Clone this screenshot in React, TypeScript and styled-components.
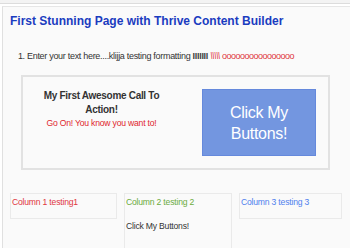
import React from "react";
import styled, { createGlobalStyle } from "styled-components";

const GlobalStyle = createGlobalStyle`
  html, body {
    margin: 0;
    padding: 0;
    background: #ffffff;
  }
  body {
    font-family: "Liberation Sans", Arial, sans-serif;
    overflow: hidden;
  }
`;

const TopStrip = styled.div`
  height: 3px;
  background: #f3f3f3;
  border-bottom: 1px solid #dcdcdc;
`;

const Panel = styled.div`
  box-sizing: border-box;
  margin: 2px 0 0 2px;
  height: calc(100vh - 6px);
  overflow: hidden;
  background: #fafafa;
  border-top: 1px solid #e6e6e6;
  border-left: 1px solid #e0e0e0;
  padding: 0 0 0 7px;
`;

const Title = styled.h1`
  margin: 0;
  padding-top: 5px;
  font-family: "Liberation Sans", Arial, sans-serif;
  font-weight: bold;
  font-size: 12px;
  line-height: 18px;
  color: #1b3cc0;
  white-space: nowrap;
`;

const List = styled.ol`
  margin: 19px 0 0 0;
  padding-left: 17px;
  font-size: 9px;
  line-height: 14px;
  letter-spacing: -0.3px;
  color: #333;
  white-space: nowrap;
`;

const Strong = styled.b`
  color: #444;
`;

const Red = styled.span<{ $italic?: boolean }>`
  color: #e0363e;
  font-style: ${(p) => (p.$italic ? "italic" : "normal")};
  letter-spacing: ${(p) => (p.$italic ? "-0.6px" : "-0.5px")};
`;

const CtaBox = styled.div`
  margin: 12px 20px 0 11px;
  height: 91px;
  border: 2px solid #e2e2e2;
  display: grid;
  grid-template-columns: 1fr 114px;
  align-items: center;
  padding: 0 12px 0 8px;
`;

const CtaText = styled.div`
  align-self: start;
  padding: 12px 30px 0 0;
  text-align: center;
`;

const CtaHeading = styled.div`
  font-weight: bold;
  font-size: 10px;
  line-height: 14px;
  letter-spacing: -0.3px;
  color: #333;
`;

const CtaSub = styled.div`
  font-size: 8.6px;
  line-height: 13px;
  letter-spacing: -0.2px;
  color: #e0262e;
`;

const CtaButton = styled.button`
  height: 67px;
  width: 114px;
  background: #7396e0;
  border: 1px solid #6589dc;
  color: #ffffff;
  font-family: "Liberation Sans", Arial, sans-serif;
  font-size: 16px;
  line-height: 21px;
  letter-spacing: -0.3px;
  padding: 0;
  cursor: pointer;
`;

const Columns = styled.div`
  margin: 23px 9px 0 0;
  display: grid;
  grid-template-columns: 107px 108px 103px;
  column-gap: 7px;
  align-items: start;
`;

const Column = styled.div<{ $color: string; $tall?: boolean }>`
  min-height: ${(p) => (p.$tall ? "60px" : "22px")};
  border: 1px solid #eaeaea;
  padding: 2px 0 0 1px;
  font-size: 8.6px;
  line-height: 12px;
  letter-spacing: -0.2px;
  color: ${(p) => p.$color};
`;

const ColumnNote = styled.p`
  margin: 12px 0 0;
  color: #333;
`;

export default function App() {
  return (
    <>
      <GlobalStyle />
      <TopStrip />
      <Panel>
        <Title>First Stunning Page with Thrive Content Builder</Title>
        <List>
          <li>
            Enter your text here....klijja testing formatting <Strong>IIIIIII</Strong>{" "}
            <Red $italic>\\\\\</Red> <Red>oooooooooooooooo</Red>
          </li>
        </List>
        <CtaBox>
          <CtaText>
            <CtaHeading>
              My First Awesome Call To
              <br />
              Action!
            </CtaHeading>
            <CtaSub>Go On! You know you want to!</CtaSub>
          </CtaText>
          <CtaButton>
            Click My
            <br />
            Buttons!
          </CtaButton>
        </CtaBox>
        <Columns>
          <Column $color="#e0363e">Column 1 testing1</Column>
          <Column $color="#6aab3c" $tall>
            Column 2 testing 2
            <ColumnNote>Click My Buttons!</ColumnNote>
          </Column>
          <Column $color="#4f80ee">Column 3 testing 3</Column>
        </Columns>
      </Panel>
    </>
  );
}
